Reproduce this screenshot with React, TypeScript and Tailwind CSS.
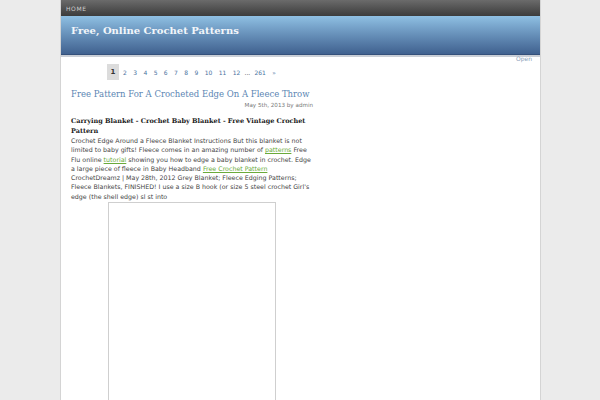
import React from "react";

export default function App() {
  const pages = ["2", "3", "4", "5", "6", "7", "8", "9", "10", "11", "12"];
  return (
    <div className="w-[600px] h-[400px] bg-[#ebebeb] overflow-hidden antialiased" style={{ fontFamily: "'DejaVu Sans', sans-serif" }}>
      <div className="ml-[60px] w-[481px] h-[400px] bg-white border-l border-r border-[#d4d4d4] flex flex-col">
        <div className="shrink-0 h-[16px] bg-gradient-to-b from-[#6b6b6b] to-[#3c3c3c] flex items-center pl-[5px]">
          <span className="text-[6px] tracking-[0.6px] text-[#cfcfcf]">HOME</span>
        </div>
        <div
          className="shrink-0 h-[39px] bg-gradient-to-b from-[#8fc0e3] to-[#40618f] border-b border-[#34507a] pl-[10px] pt-[8px] text-[10px] leading-[14px] font-bold text-[#f2f6fa]"
          style={{ fontFamily: "'DejaVu Serif', serif" }}
        >
          Free, Online Crochet Patterns
        </div>
        <div className="shrink-0 h-[2px] bg-[#c9ced6]" />
        <div className="shrink-0 flex justify-end pr-[8px] h-[5px]">
          <span className="text-[6px] leading-[6px] text-[#8aa0b8] -mt-[1px]">Open</span>
        </div>
        <div className="shrink-0 w-[244px] ml-[10px] flex flex-col">
          <div className="flex justify-center items-center mt-[2px] h-[16px]">
            <span className="bg-[#dcdcdc] h-[16px] w-[12px] flex items-center justify-center text-[7px] font-bold text-[#333] mr-[1px]">1</span>
            {pages.map((p) => (
              <span key={p} className="px-[3.2px] text-[6px] text-[#4a72a0]">{p}</span>
            ))}
            <span className="px-[1px] text-[6px] text-[#333]">...</span>
            <span className="px-[3.2px] text-[6px] text-[#4a72a0]">261</span>
            <span className="px-[3.2px] text-[6px] text-[#4a72a0]">»</span>
          </div>
          <div className="mt-[8px] text-[8.5px] leading-[13px] text-[#5b86b3] whitespace-nowrap" style={{ fontFamily: "'DejaVu Serif', serif" }}>
            Free Pattern For A Crocheted Edge On A Fleece Throw
          </div>
          <div className="text-right text-[5.6px] leading-[8px] text-[#777] pr-[2px]">May 5th, 2013 by admin</div>
          <div className="mt-[8px] text-[6.5px] leading-[9.5px] font-bold text-[#222]" style={{ fontFamily: "'DejaVu Serif', serif" }}>
            Carrying Blanket - Crochet Baby Blanket - Free Vintage Crochet Pattern
          </div>
          <div className="text-[6.3px] leading-[9.3px] text-[#444]">
            Crochet Edge Around a Fleece Blanket Instructions But this blanket is not limited to baby gifts! Fleece comes in an amazing number of{" "}
            <span className="text-[#6aaa3a] underline">patterns</span> Free Flu online{" "}
            <span className="text-[#6aaa3a] underline">tutorial</span> showing you how to edge a baby blanket in crochet. Edge a large piece of fleece in Baby Headband{" "}
            <span className="text-[#6aaa3a] underline">Free Crochet Pattern</span> CrochetDreamz | May 28th, 2012 Grey Blanket; Fleece Edging Patterns; Fleece Blankets, FINISHED! I use a size B hook (or size 5 steel crochet Girl's edge (the shell edge) sl st into
          </div>
          <div className="ml-[37px] mt-[1px] w-[168px] h-[220px] border border-[#cfcfcf] bg-white" />
        </div>
      </div>
    </div>
  );
}
